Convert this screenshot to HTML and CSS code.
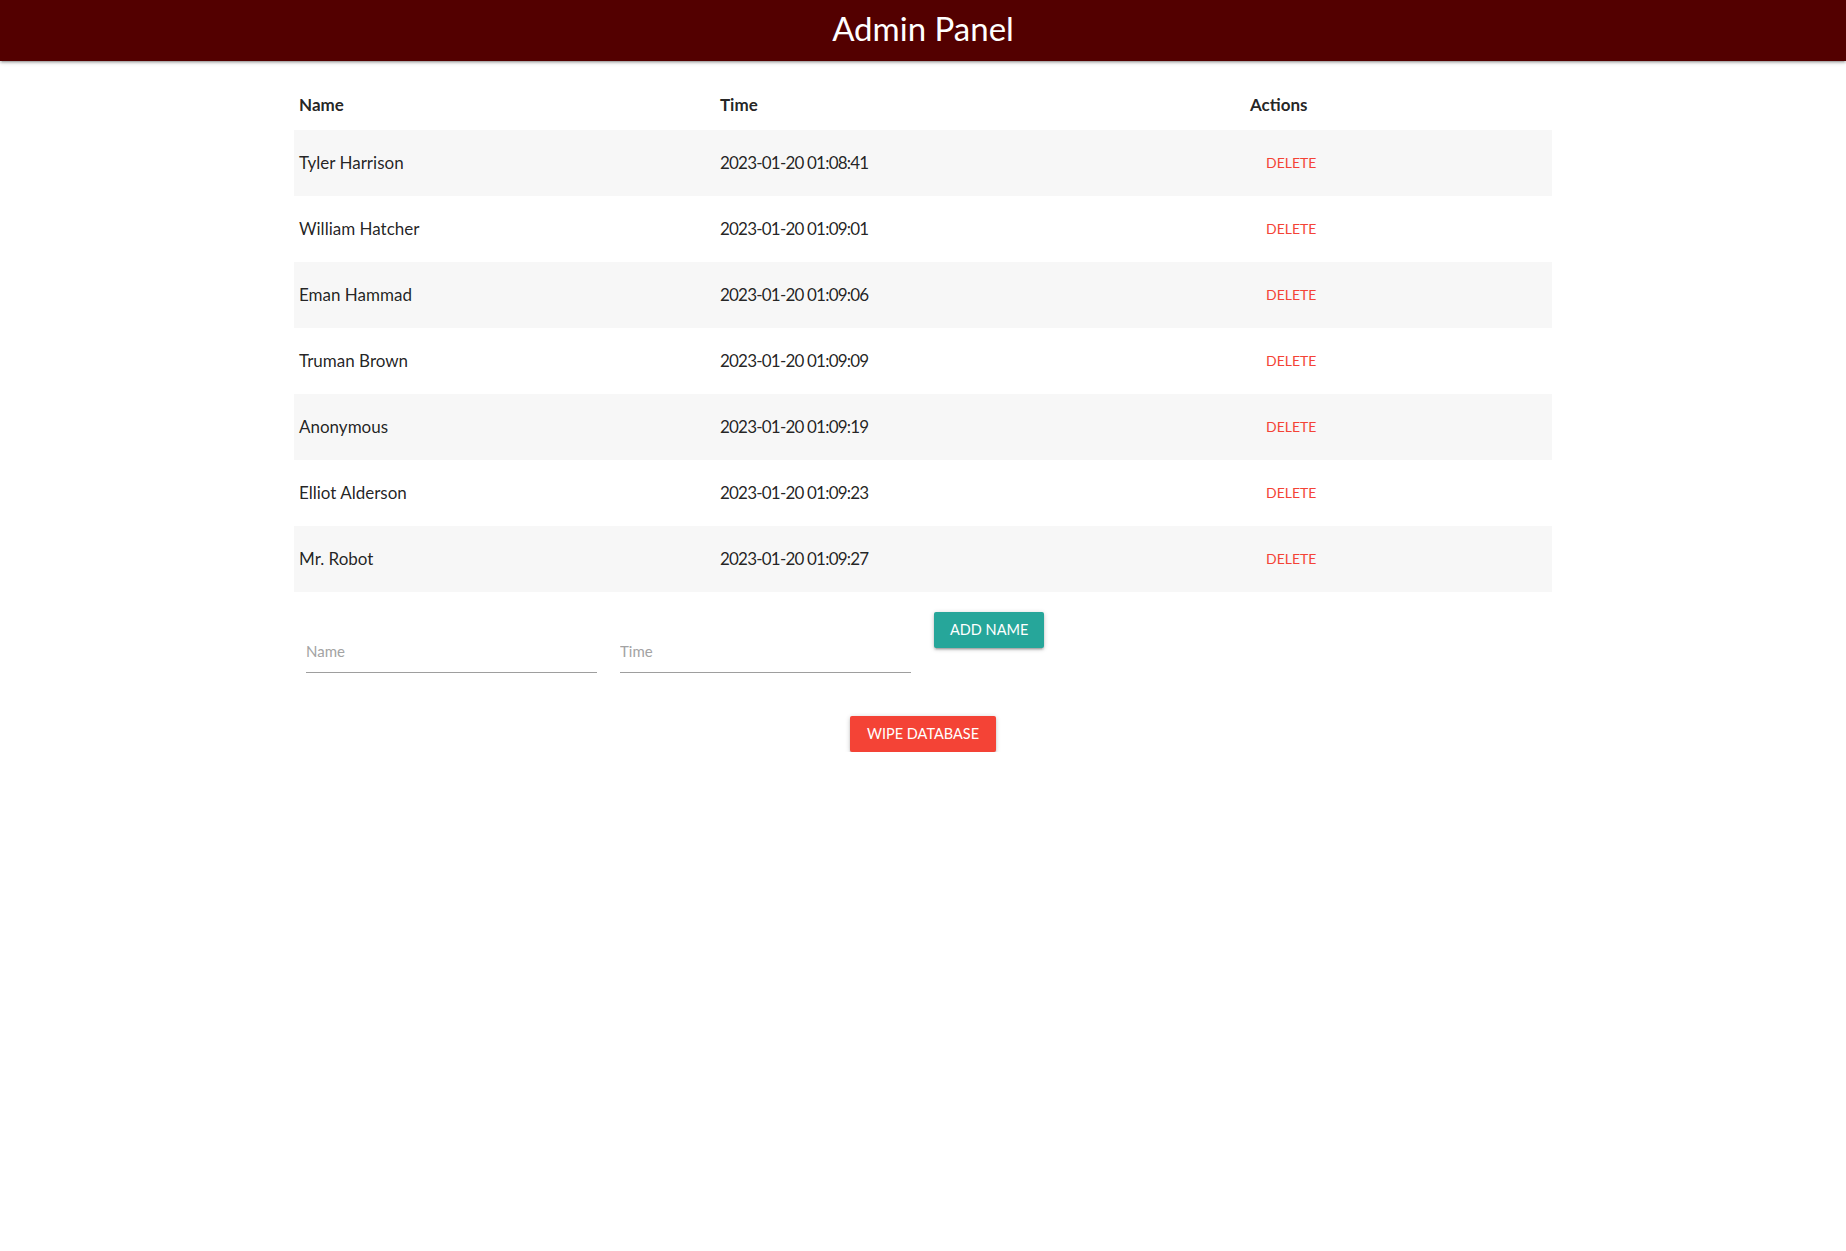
FILE: index.html
```html
<!DOCTYPE html>
<html lang="en">
<head>
<meta charset="utf-8">
<title>Admin Panel</title>
<link rel="stylesheet" href="styles.css">
</head>
<body>
<nav class="topbar">
  <span class="brand">Admin Panel</span>
</nav>
<main class="container">
  <table class="names">
    <colgroup>
      <col class="c-name">
      <col class="c-time">
      <col class="c-actions">
    </colgroup>
    <thead>
      <tr><th>Name</th><th>Time</th><th>Actions</th></tr>
    </thead>
    <tbody>
      <tr><td>Tyler Harrison</td><td class="time">2023-01-20 01:08:41</td><td><button class="btn-flat">Delete</button></td></tr>
      <tr><td>William Hatcher</td><td class="time">2023-01-20 01:09:01</td><td><button class="btn-flat">Delete</button></td></tr>
      <tr><td>Eman Hammad</td><td class="time">2023-01-20 01:09:06</td><td><button class="btn-flat">Delete</button></td></tr>
      <tr><td>Truman Brown</td><td class="time">2023-01-20 01:09:09</td><td><button class="btn-flat">Delete</button></td></tr>
      <tr><td>Anonymous</td><td class="time">2023-01-20 01:09:19</td><td><button class="btn-flat">Delete</button></td></tr>
      <tr><td>Elliot Alderson</td><td class="time">2023-01-20 01:09:23</td><td><button class="btn-flat">Delete</button></td></tr>
      <tr><td>Mr. Robot</td><td class="time">2023-01-20 01:09:27</td><td><button class="btn-flat">Delete</button></td></tr>
    </tbody>
  </table>
  <form class="add-form">
    <input class="field" type="text" placeholder="Name">
    <input class="field" type="text" placeholder="Time">
    <button type="button" class="btn btn-teal">Add Name</button>
  </form>
  <div class="wipe-row">
    <button type="button" class="btn btn-red">Wipe Database</button>
  </div>
</main>
</body>
</html>
```
FILE: styles.css
```css
html, body {
  margin: 0;
  padding: 0;
  background: #ffffff;
}
body {
  font-family: Lato, "Liberation Sans", sans-serif;
  color: rgba(0, 0, 0, 0.87);
}
.topbar {
  display: block;
  height: 61px;
  background: #530000;
  text-align: center;
  box-shadow: 0 2px 2px 0 rgba(0,0,0,.14), 0 3px 1px -2px rgba(0,0,0,.12), 0 1px 5px 0 rgba(0,0,0,.2);
  position: relative;
  z-index: 2;
}
.brand {
  display: inline-block;
  color: #ffffff;
  font-size: 33px;
  line-height: 57px;
  font-weight: 400;
}
.container {
  width: 1258px;
  margin: 0 auto;
}
.names {
  width: 100%;
  margin-top: 16px;
  border-collapse: collapse;
  table-layout: fixed;
}
.c-name { width: 421px; }
.c-time { width: 530px; }
.c-actions { width: 307px; }
.names th {
  text-align: left;
  font-weight: 700;
  font-size: 17px;
  line-height: 24px;
  height: 24px;
  padding: 16px 5px 13px;
}
.names td {
  font-size: 17px;
  line-height: 24px;
  height: 24px;
  padding: 21px 5px;
}
.names td.time {
  letter-spacing: -0.8px;
}
.names tbody tr:nth-child(odd) {
  background: #f7f7f7;
}
.btn-flat {
  display: inline-block;
  vertical-align: top;
  border: none;
  background: transparent;
  color: #f44336;
  font-family: Lato, "Liberation Sans", sans-serif;
  font-size: 14px;
  text-transform: uppercase;
  padding: 0 16px;
  margin: 0;
  height: 24px;
  line-height: 24px;
  cursor: pointer;
}
.add-form {
  display: flex;
  align-items: flex-start;
  gap: 23px;
  padding-left: 12px;
}
.field {
  width: 291px;
  height: 42px;
  margin-top: 38px;
  padding: 0;
  border: none;
  border-bottom: 1px solid #9e9e9e;
  background: transparent;
  font-family: Lato, "Liberation Sans", sans-serif;
  font-size: 15px;
  color: rgba(0,0,0,0.87);
  outline: none;
}
.field::placeholder {
  color: #a3a3a3;
}
.btn {
  border: none;
  border-radius: 2px;
  height: 36px;
  line-height: 36px;
  color: #ffffff;
  font-family: Lato, "Liberation Sans", sans-serif;
  font-size: 14.5px;
  text-transform: uppercase;
  box-shadow: 0 2px 2px 0 rgba(0,0,0,.14), 0 3px 1px -2px rgba(0,0,0,.12), 0 1px 5px 0 rgba(0,0,0,.2);
  cursor: pointer;
}
.btn-teal {
  background: #26a69a;
  margin-top: 20px;
  padding: 0 16px;
}
.btn-red {
  background: #f44336;
  padding: 0 17px;
}
.wipe-row {
  display: flex;
  justify-content: center;
  margin-top: 43px;
}
```
